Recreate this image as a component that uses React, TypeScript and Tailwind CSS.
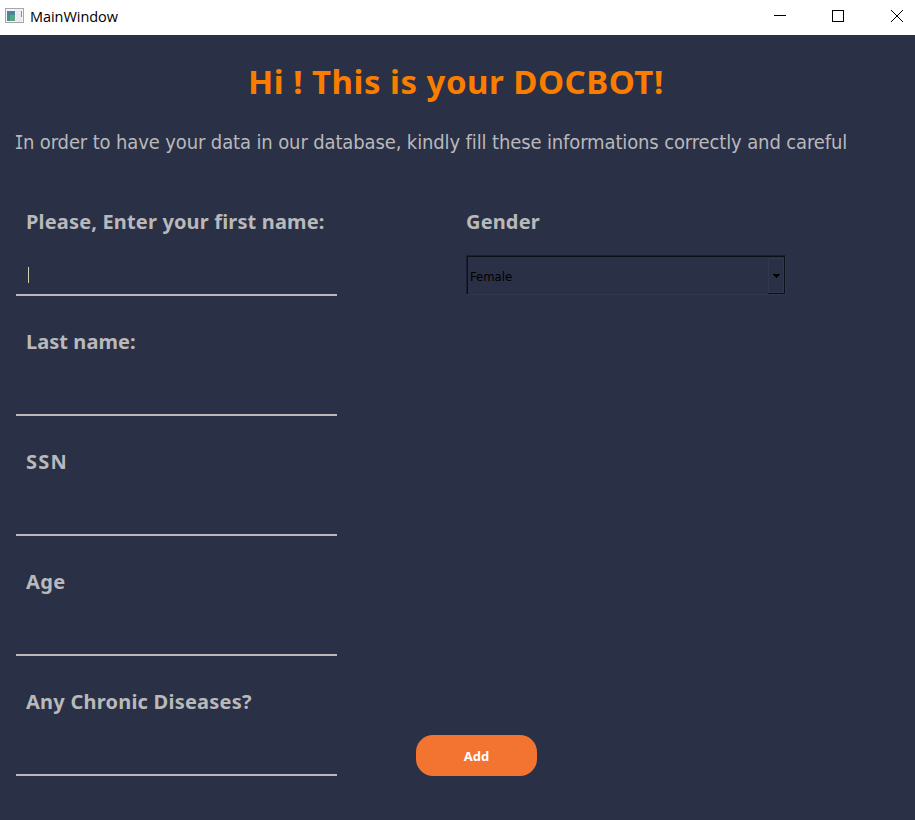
const fields = [
  { label: "Please, Enter your first name:", tracking: "tracking-[0.16px]" },
  { label: "Last name:", tracking: "tracking-[0.05px]" },
  { label: "SSN", tracking: "tracking-[1.2px]" },
  { label: "Age", tracking: "tracking-[0.4px]" },
  { label: "Any Chronic Diseases?", tracking: "tracking-[0.23px]" },
];

function TitleBar() {
  return (
    <header className="flex h-[35px] items-start justify-between bg-white font-['Open_Sans',sans-serif] text-black">
      <div className="flex items-start pt-2 pl-[5px]">
        <svg width="19" height="16" viewBox="0 0 19 16" shapeRendering="crispEdges">
          <rect x="0.5" y="0.5" width="18" height="14" fill="#f4f4f4" stroke="#a5a8ab" />
          <rect x="2" y="3" width="8" height="10" fill="#498f91" />
          <rect x="2" y="3" width="8" height="4" fill="#4a8599" />
          <rect x="5" y="7" width="5" height="6" fill="#5aa583" />
          <rect x="11" y="2" width="6" height="12" fill="#e9ebed" />
          <rect x="16" y="3" width="1" height="6" fill="#62a486" />
        </svg>
        <span className="-mt-px ml-[6px] text-[14.5px] leading-5 tracking-[-0.05px] whitespace-nowrap">MainWindow</span>
      </div>
      <svg width="141" height="35" viewBox="774 0 141 35" fill="none" stroke="#000">
        <path d="M774 15.5h12M832.500 10.500h11v11h-11z" shapeRendering="crispEdges" />
        <path d="M891 10l12 12M903 10l-12 12" />
      </svg>
    </header>
  );
}

function Field({ label, tracking, active }: { label: string; tracking: string; active: boolean }) {
  return (
    <div className="h-[120px] w-[321px]">
      <div className={`h-10 pl-[10px] text-[20px] leading-[42px] font-bold whitespace-nowrap ${tracking}`}>
        {label}
      </div>
      <div className="flex h-[55px] items-end border-b-2 border-[#b9b9bb] pb-[11px] pl-3">
        {active && <span className="h-4 w-px bg-[#d6cfb0]" />}
      </div>
    </div>
  );
}

export default function App() {
  return (
    <div className="h-[820px] w-[915px] overflow-hidden bg-[#2a3045] font-['Noto_Sans',sans-serif] text-[#b9b9bb] [font-variant-ligatures:none]">
      <TitleBar />
      <main>
        <h1 className="h-[87px] pl-[248px] text-[33px] leading-[94px] font-bold tracking-[0.5px] whitespace-nowrap text-[#fa7d00]">
          Hi ! This is your DOCBOT!
        </h1>
        <p className="h-[79px] pl-4 font-['DejaVu_Sans_Condensed','DejaVu_Sans',sans-serif] text-[20px] leading-10 tracking-[-0.125px] whitespace-nowrap [font-stretch:condensed]">
          <span className="-mr-[2px] -ml-[3px] inline-block scale-x-75 font-['DejaVu_Sans_Mono',monospace]">I</span>
          n order to have your data in our database, kindly fill these informations correctly and careful
        </p>
        <div className="flex pl-4">
          <div>
            {fields.map((field, i) => (
              <Field key={field.label} label={field.label} tracking={field.tracking} active={i === 0} />
            ))}
          </div>
          <div className="ml-[79px] w-[370px]">
            <div className="pl-[50px]">
              <div className="h-[54px] text-[20px] leading-[42px] font-bold tracking-[0.15px]">Gender</div>
              <div className="h-10 w-[320px] border border-t-[#1b1f2e] border-r-[#30374f] border-b-[#30374f] border-l-[#1b1f2e]">
                <div className="flex h-[38px] items-stretch justify-between border-t border-r border-l border-[#0e1017] pl-[2px] font-['DejaVu_Sans_Condensed','DejaVu_Sans',sans-serif] text-[13px] text-black [font-stretch:condensed]">
                  <span className="leading-10">Female</span>
                  <span className="flex w-4 items-center justify-center border-b border-[#0e1017]">
                    <span className="mt-px flex h-[35px] w-full items-center justify-center border border-[#30374f]">
                      <svg width="7" height="4" viewBox="0 0 7 4" shapeRendering="crispEdges">
                        <path d="M0 0h7v1h-1v1h-1v1h-1v1h-1v-1h-1v-1h-1v-1h-1z" fill="#000" />
                      </svg>
                    </span>
                  </span>
                </div>
              </div>
            </div>
            <button className="mt-[440px] block h-[41px] w-[121px] rounded-[17px] bg-[#f27430] text-center text-[13px] leading-[42px] font-bold text-white">
              Add
            </button>
          </div>
        </div>
      </main>
    </div>
  );
}
